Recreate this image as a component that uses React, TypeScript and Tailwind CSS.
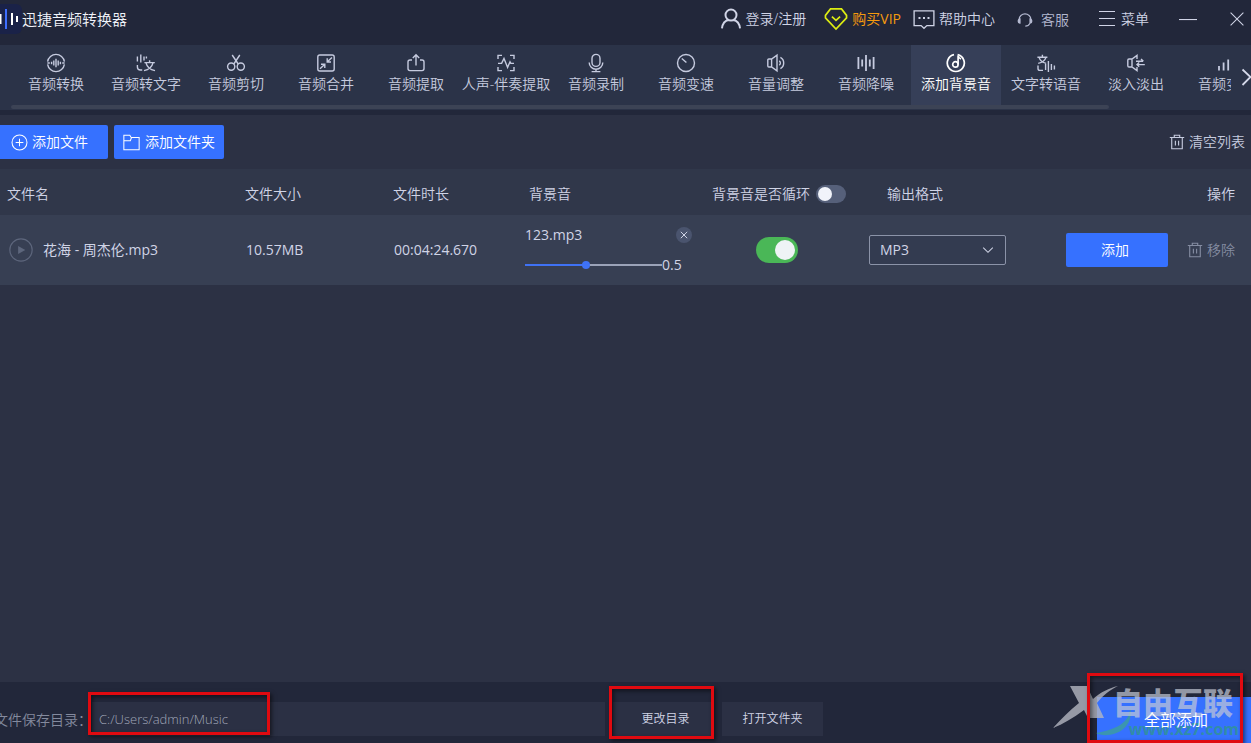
import { useState } from "react";
import type { ReactNode } from "react";
import { clsx } from "clsx";

const TOOLS: { label: string; icon: ReactNode }[] = [
  {
    label: "音频转换",
    icon: (
      <>
        <path d="M1.6 8.6a8.5 8.5 0 0 1 16.8 0M18.4 11.4a8.5 8.5 0 0 1-16.8 0" />
        <path d="M1.4 10h2.4M16.2 10h2.4M5.6 8.8v2.4M7.8 7.6v4.8M10 5.8v8.4M12.2 7.6v4.8M14.4 8.8v2.4" />
      </>
    ),
  },
  {
    label: "音频转文字",
    icon: (
      <>
        <path d="M1.4 3.6v5M4.8 1.4v8M8 3.6v4M10.4 3.6v2M1.4 12v2a3 3 0 0 0 3 3h1.8" />
        <path d="M8.4 9.6h10.4M13.6 7.2v2.4M10 9.8c1 4 3.8 6.8 9 7.8M17 9.8c-1 4-4 6.8-9 7.8" />
      </>
    ),
  },
  {
    label: "音频剪切",
    icon: (
      <>
        <circle cx="5.2" cy="13.6" r="3.6" />
        <circle cx="14.8" cy="13.6" r="3.6" />
        <path d="M6.2 2l6 9M13.8 2l-6 9" />
      </>
    ),
  },
  {
    label: "音频合并",
    icon: (
      <>
        <rect x="1.8" y="2" width="16.4" height="16" rx="2" />
        <path d="M16 4.4l-4.6 4.4M11.2 5.2v3.8h3.8M4 15.8l4.6-4.4M8.8 15v-3.8H5" />
      </>
    ),
  },
  {
    label: "音频提取",
    icon: (
      <>
        <path d="M6 7H4a2 2 0 0 0-2 2v6.6a2 2 0 0 0 2 2h12a2 2 0 0 0 2-2V9a2 2 0 0 0-2-2h-2" />
        <path d="M10 12.6V2M6.8 5L10 1.8 13.2 5" />
      </>
    ),
  },
  {
    label: "人声-伴奏提取",
    icon: (
      <>
        <path d="M2 6V2.4h4M14 2.4h4V6M18 14v3.6h-4M6 17.6H2V14" />
        <path d="M2 10.4h3.6l2.4-5 3.6 9 2.4-5.6.8 1.6H18" />
      </>
    ),
  },
  {
    label: "音频录制",
    icon: (
      <>
        <rect x="6" y="1.4" width="8" height="12" rx="4" />
        <path d="M3.2 9.4a6.8 6.8 0 0 0 13.6 0M10 16.2v2.4M5.6 18.6h8.8" />
      </>
    ),
  },
  {
    label: "音频变速",
    icon: (
      <>
        <circle cx="10" cy="10" r="8.5" />
        <path d="M5.8 5.4l4.6 4.2" />
      </>
    ),
  },
  {
    label: "音量调整",
    icon: (
      <>
        <path d="M5.6 6H2.8a1 1 0 0 0-1 1v6a1 1 0 0 0 1 1h2.8l5.4 3.8V2.2zM5.6 6v8" />
        <path d="M13.2 7.8a2.6 2.6 0 0 1 0 4.4M14.4 4.4a6.4 6.4 0 0 1 0 11.2" />
      </>
    ),
  },
  {
    label: "音频降噪",
    icon: <path strokeWidth="1.8" d="M2.4 4v12M6.2 6.6v6.8M10 2v16M13.8 6.6v6.8M17.6 4v12" />,
  },
  {
    label: "添加背景音",
    icon: (
      <>
        <path strokeWidth="1.7" d="M11.6 1.7A8.5 8.5 0 1 1 8 1.7" />
        <circle cx="9.4" cy="11.4" r="2.7" strokeWidth="1.7" />
        <path strokeWidth="1.7" d="M12.1 11.4V2.6c.4 2 1.5 2.8 2.9 3.4" />
      </>
    ),
  },
  {
    label: "文字转语音",
    icon: (
      <>
        <path d="M1.4 4.2h10M6.4 1.8v2.4M3 4.4c1 3 3.8 5.2 7.2 6M10 4.4c-1 3-3.8 5.2-7.8 6" />
        <path d="M2 12.4v3a2 2 0 0 0 2 2h3M9.6 11v6M12.4 8v11M15.4 11v6M18.4 12.4v4" />
      </>
    ),
  },
  {
    label: "淡入淡出",
    icon: (
      <>
        <path d="M11 6V2.4L6 6H3a1.2 1.2 0 0 0-1.2 1.2v5.6A1.2 1.2 0 0 0 3 14h3l5 3.6V14M6 6v8" />
        <path d="M10 8.2h7M15 6l2.4 2.2M18.8 11.6H11M13.2 9.6L11 11.6l2.2 2.2" />
      </>
    ),
  },
  {
    label: "音频变声",
    icon: <path strokeWidth="1.8" d="M3 13v4.4M7.6 9.6v7.8M12.2 6.4v11M16.4 3v14.4" />,
  },
];

function Icon({ children, className }: { children: ReactNode; className?: string }) {
  return (
    <svg
      viewBox="0 0 20 20"
      fill="none"
      stroke="currentColor"
      strokeWidth="1.4"
      className={clsx("shrink-0", className ?? "size-5")}
      aria-hidden="true"
    >
      {children}
    </svg>
  );
}

function TrashIcon() {
  return (
    <Icon className="size-4">
      <path d="M1 4.4h18M6.6 4.2V1.6h6.8v2.6M3.4 4.6v13.8h13.2V4.6M8 8.4v6M12 8.4v6" />
    </Icon>
  );
}

function HighlightBox({ className }: { className: string }) {
  return (
    <span
      className={clsx(
        "absolute border-3 border-[#e00a10] shadow-[2px_2px_4px_rgba(0,0,0,0.5),inset_2px_2px_4px_rgba(0,0,0,0.5)] pointer-events-none",
        className,
      )}
    />
  );
}

function TitleBar() {
  return (
    <header className="flex h-[45px] items-center pb-[7px] text-[#d0d4e6]">
      <svg viewBox="0 0 22 30" className="h-[30px] w-[22px] shrink-0" aria-hidden="true">
        <path d="M0 0h16a6 6 0 0 1 6 6v18a6 6 0 0 1-6 6H0z" fill="#1a2248" />
        <path d="M.5 10v10M12 9v12M17 12v6" stroke="#fff" strokeWidth="2" />
        <path d="M6 5v20" stroke="#3f6fff" strokeWidth="2" />
      </svg>
      <h1 className="pt-[2px] text-[15px] font-[350] text-[#f2f4fb]">迅捷音频转换器</h1>

      <div className="ml-auto flex items-center pr-[6px]">
        <button className="mr-[18px] flex items-center gap-1">
          <Icon className="size-[22px]">
            <circle cx="10" cy="6.4" r="5" strokeWidth="1.8" />
            <path strokeWidth="1.8" d="M1.8 18.6c.6-4.6 3.4-7.2 6-7.6M18.2 18.6c-.6-4.6-3.4-7.2-6-7.6" />
          </Icon>
          登录/注册
        </button>
        <button className="mr-3 flex items-center gap-1 font-normal text-[#f59a0e]">
          <Icon className="size-6 text-[#dcec12]">
            <path d="M5.4 1.6h9.2L18.8 7v2L10 18.4 1.2 9V7zM6.6 8l3.4 3.2L13.4 8" />
          </Icon>
          购买VIP
        </button>
        <button className="mr-[22px] flex items-center gap-1">
          <Icon className="size-[22px]">
            <path strokeWidth="1.2" d="M1 2.6h18V16h-6.4L10 18.4 7.4 16H1z" />
            <path strokeWidth="1.8" d="M5 9h1.8M9.1 9h1.8M13.2 9H15" />
          </Icon>
          帮助中心
        </button>
        <button className="mr-7 flex items-center gap-2 pt-[2px] text-[#b4b9d0]">
          <Icon className="size-4">
            <path d="M4 14.6A7.6 7.6 0 1 1 16 14.6M3.8 8.6c-3 .4-3.4 4.8 0 5.4zM16.2 8.6c3 .4 3.4 4.8 0 5.4zM16 14.4c-1 2.2-2.6 3.2-5.6 3.2" />
          </Icon>
          客服
        </button>
        <button className="mr-[30px] flex items-center gap-1">
          <Icon>
            <path strokeWidth="1.2" d="M2 2.5h16M2 9.5h16M2 16.5h16" />
          </Icon>
          菜单
        </button>
        <button aria-label="最小化" className="mr-8">
          <Icon className="size-[18px]">
            <path strokeWidth="1.2" d="M0 10.6h20" />
          </Icon>
        </button>
        <button aria-label="关闭">
          <Icon className="size-4">
            <path strokeWidth="1.3" d="M2 2l16 16M18 2L2 18" />
          </Icon>
        </button>
      </div>
    </header>
  );
}

function ToolNav() {
  const [active, setActive] = useState("添加背景音");

  return (
    <nav className="flex h-[65px] bg-[#2b3348]">
      <div className="min-w-0 flex-1 overflow-hidden pl-[11px]">
        <div className="flex">
          {TOOLS.map((tool) => (
            <button
              key={tool.label}
              onClick={() => setActive(tool.label)}
              className={clsx(
                "flex h-[60px] w-[90px] shrink-0 flex-col items-center pt-2 leading-[22px] whitespace-nowrap",
                active === tool.label ? "bg-[#363f58] text-white" : "text-[#c6cbdf]",
              )}
            >
              <Icon>{tool.icon}</Icon>
              <span>{tool.label}</span>
            </button>
          ))}
        </div>
        <div className="h-1 w-[90%] rounded-full bg-[#3c4355]" />
      </div>
      <button aria-label="更多工具" className="flex w-5 justify-end overflow-hidden text-[#d5d9ea]">
        <Icon className="mt-[22px] size-5">
          <path strokeWidth="1.8" d="M11.5 2.5l8 7.5-8 8" />
        </Icon>
      </button>
    </nav>
  );
}

function Toolbar() {
  return (
    <div className="flex items-center gap-[6px] py-[10px]">
      <button className="flex h-[34px] items-center gap-1 rounded-r-xs bg-[#3671ff] pr-5 pl-[11px] text-white">
        <Icon className="size-[17px]">
          <circle cx="10" cy="10" r="8.8" strokeWidth="1.2" />
          <path strokeWidth="1.2" d="M10 5.5v9M5.5 10h9" />
        </Icon>
        添加文件
      </button>
      <button className="flex h-[34px] items-center gap-[5px] rounded-xs bg-[#3671ff] px-[9px] text-white">
        <Icon className="size-[17px]">
          <path strokeWidth="1.2" d="M1 18.5V1.5h7l1.6 2.6H19v14.4zM1 8h7.6l1.4-3.8" />
        </Icon>
        添加文件夹
      </button>
      <button className="ml-auto flex items-center gap-1 pr-[6px] text-[#c6cbdf]">
        <TrashIcon />
        清空列表
      </button>
    </div>
  );
}

function FileTable() {
  const [loopAll, setLoopAll] = useState(false);
  const [loop, setLoop] = useState(true);
  const [volume, setVolume] = useState(44);
  const [format, setFormat] = useState("MP3");

  return (
    <table className="w-full table-fixed text-left text-[#d0d4e6]">
      <thead>
        <tr className="h-[46px] bg-[#30374a] [&>th]:pt-1 [&>th]:font-[350]">
          <th className="pl-[7px]">文件名</th>
          <th className="w-[148px]">文件大小</th>
          <th className="w-[132px]">文件时长</th>
          <th className="w-[187px] pl-1">背景音</th>
          <th className="w-[157px]">
            <label className="flex items-center gap-[6px]">
              背景音是否循环
              <input
                type="checkbox"
                role="switch"
                checked={loopAll}
                onChange={(e) => setLoopAll(e.target.checked)}
                className="h-[18px] w-[30px] appearance-none rounded-full bg-[#56607a] p-[2px] before:block before:size-[14px] before:rounded-full before:bg-[#f1f3fa] checked:bg-[#4ab757] checked:before:ml-3"
              />
            </label>
          </th>
          <th className="w-[197px] pl-[18px]">输出格式</th>
          <th className="w-[185px] pr-4 text-right">操作</th>
        </tr>
      </thead>
      <tbody>
        <tr className="h-[70px] bg-[#373f53]">
          <td className="pl-[9px] font-normal">
            <div className="flex items-center gap-[10px]">
              <button aria-label="播放" className="text-[#5d667c]">
                <Icon className="size-6">
                  <circle cx="10" cy="10" r="9.3" strokeWidth="1" />
                  <path d="M7.6 6.6l6 3.4-6 3.4z" fill="currentColor" stroke="none" />
                </Icon>
              </button>
              花海 - 周杰伦.mp3
            </div>
          </td>
          <td className="pl-px font-normal">10.57MB</td>
          <td className="pl-px font-normal">00:04:24.670</td>
          <td className="font-normal">
            <div className="flex w-[167px] items-center justify-between">
              123.mp3
              <button
                aria-label="移除背景音"
                className="flex size-4 items-center justify-center rounded-full bg-[#4a546e]"
              >
                <Icon className="size-2">
                  <path strokeWidth="2.5" d="M2 2l16 16M18 2L2 18" />
                </Icon>
              </button>
            </div>
            <div className="mt-[10px] flex items-center">
              <input
                type="range"
                aria-label="背景音音量"
                value={volume}
                onChange={(e) => setVolume(Number(e.target.value))}
                style={{
                  backgroundImage: `linear-gradient(to right, #3f72f5 ${volume}%, #9ba3b8 ${volume}%)`,
                }}
                className="h-[2px] w-[137px] appearance-none [&::-webkit-slider-thumb]:size-2 [&::-webkit-slider-thumb]:appearance-none [&::-webkit-slider-thumb]:rounded-full [&::-webkit-slider-thumb]:bg-[#3f72f5]"
              />
              0.5
            </div>
          </td>
          <td className="pl-11">
            <input
              type="checkbox"
              role="switch"
              aria-label="循环背景音"
              checked={loop}
              onChange={(e) => setLoop(e.target.checked)}
              className="block h-[26px] w-[42px] appearance-none rounded-full bg-[#56607a] p-[3px] before:block before:size-5 before:rounded-full before:bg-[#eef3f5] checked:bg-[#4ab757] checked:before:ml-4"
            />
          </td>
          <td className="font-normal">
            <div className="relative w-[137px]">
              <select
                aria-label="输出格式"
                value={format}
                onChange={(e) => setFormat(e.target.value)}
                className="block h-[30px] w-full appearance-none rounded-xs border border-[#8b93a8] bg-[#333b50] pl-[10px]"
              >
                <option>MP3</option>
                <option>WAV</option>
                <option>FLAC</option>
              </select>
              <Icon className="pointer-events-none absolute top-[9px] right-3 size-3">
                <path strokeWidth="1.7" d="M2 6l8 8 8-8" />
              </Icon>
            </div>
          </td>
          <td className="pr-4">
            <div className="flex items-center justify-between">
              <button className="h-[34px] w-[102px] rounded-xs bg-[#3671ff] pr-1 text-white">添加</button>
              <button className="flex items-center gap-1 text-[#858da2]">
                <TrashIcon />
                移除
              </button>
            </div>
          </td>
        </tr>
      </tbody>
    </table>
  );
}

function Watermark() {
  return (
    <span
      className="pointer-events-none absolute -top-4 right-2 block h-[58px] w-[190px] select-none"
      aria-hidden="true"
    >
      <svg viewBox="0 0 190 58" className="absolute inset-0 size-full">
        <path d="M77 25c1 14-10 23-34 27 10 6 40 0 34-27z" fill="#3fae7a" fillOpacity=".6" />
        <path
          d="M17 5h17l6 13C48 11 56 7 65 5c-8 4-15 9-21 17l7 15H35l-4-8C20 37 10 43 0 47c8-9 16-17 26-25z"
          fill="#b4b7c0"
          fillOpacity=".8"
        />
      </svg>
      <span className="absolute top-1 right-[10px] text-[30px] leading-9 font-black whitespace-nowrap text-[#c6cad6]/70">
        自由互联
      </span>
      <span className="absolute right-1 bottom-0 text-base leading-5 font-bold text-[#2f9a80]/70">www.xz7.com</span>
    </span>
  );
}

function SaveBar() {
  return (
    <footer className="flex h-[61px] items-start bg-[#22273a]">
      <label htmlFor="save-dir" className="-ml-[6px] shrink-0 pt-7 text-[#848a9e]">
        文件保存目录：
      </label>
      <div className="relative mt-5 w-[513px]">
        <input
          id="save-dir"
          defaultValue="C:/Users/admin/Music"
          className="block h-[34px] w-full bg-[#2b3044] pl-[7px] text-[13px] text-[#a0a6b8]"
        />
        <HighlightBox className="-top-[10px] -left-1 h-[43px] w-[182px]" />
      </div>
      <div className="relative mt-5 ml-2">
        <button className="block h-[34px] w-[101px] bg-[#2b3044] pl-1 text-xs text-[#d0d4e6]">更改目录</button>
        <HighlightBox className="-top-4 -left-1 h-[53px] w-[105px]" />
      </div>
      <button className="mt-5 ml-2 h-[34px] w-[101px] bg-[#2b3044] text-xs text-[#d0d4e6]">打开文件夹</button>
      <div className="relative mt-[15px] ml-auto">
        <button className="relative block h-[46px] w-[154px] bg-[#3671ff] pl-1 text-base text-white">
          <Watermark />
          <span className="relative">全部添加</span>
        </button>
        <HighlightBox className="-top-6 right-2 bottom-0 -left-[10px]" />
      </div>
    </footer>
  );
}

export default function App() {
  return (
    <div className="flex min-h-screen flex-col overflow-hidden bg-[#22273a] font-['Open_Sans','Noto_Sans_CJK_SC',sans-serif] text-sm font-[350]">
      <TitleBar />
      <ToolNav />
      <main className="mt-[5px] flex-1 bg-[#2c3144]">
        <Toolbar />
        <FileTable />
      </main>
      <SaveBar />
    </div>
  );
}
